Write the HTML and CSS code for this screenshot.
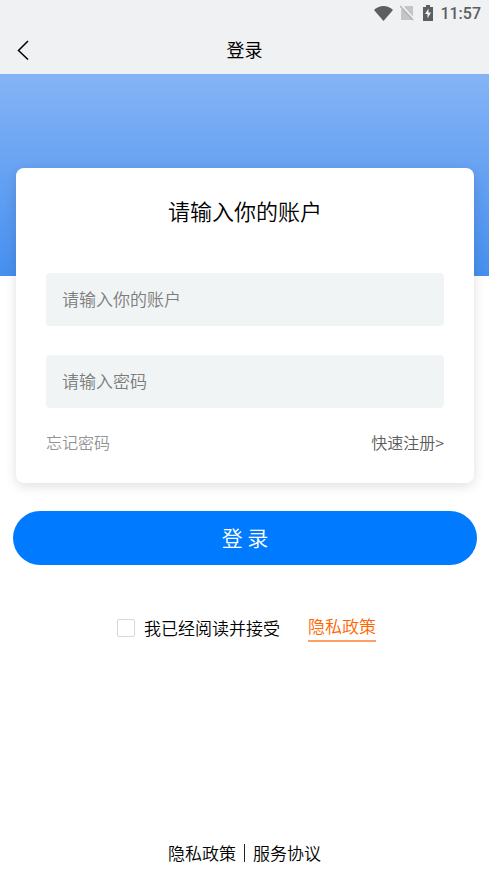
FILE: index.html
```html
<!DOCTYPE html>
<html lang="zh-CN">
<head>
<meta charset="utf-8">
<meta name="viewport" content="width=device-width, initial-scale=1">
<title>登录</title>
<link rel="stylesheet" href="styles.css">
</head>
<body>
<header class="top">
  <div class="status">
    <svg class="wifi" width="19" height="15" viewBox="0 0 19 15" aria-hidden="true"><path d="M0 4C3 1.300 6 0 9.500 0s6.500 1.300 9.500 4L9.500 15z"/></svg>
    <svg class="sim" width="14" height="16" viewBox="0 0 14 16" aria-hidden="true"><path class="sim-body" d="M5 1h8v14H1V5z"/><path class="sim-gap" d="M1 0l14 15"/><path class="sim-slash" d="M0 1l13 14"/></svg>
    <svg class="battery" width="10" height="16" viewBox="0 0 10 16" aria-hidden="true"><path d="M3 0h4v2h3v14H0V2h3z"/><path class="bolt" d="M5.500 3.500v4H8l-3.500 6v-4.500H2z"/></svg>
    <time class="clock">11:57</time>
  </div>
  <nav class="nav">
    <button class="back" type="button" aria-label="返回"><svg width="12" height="20" viewBox="0 0 12 20" aria-hidden="true"><path d="M11 1L1.500 10.500l9.500 9"/></svg></button>
    <h1 class="nav-title">登录</h1>
  </nav>
</header>
<main class="main">
  <form class="form">
    <section class="card">
      <h2 class="card-title">请输入你的账户</h2>
      <input class="field" type="text" placeholder="请输入你的账户" aria-label="账户">
      <input class="field" type="password" placeholder="请输入密码" aria-label="密码">
      <div class="links">
        <a class="forgot" href="#">忘记密码</a>
        <a class="register" href="#">快速注册&gt;</a>
      </div>
    </section>
    <button class="submit" type="submit">登 录</button>
    <div class="agree">
      <label class="agree-label"><input class="check" type="checkbox">我已经阅读并接受</label>
      <a class="policy" href="#">隐私政策</a>
    </div>
  </form>
</main>
<footer class="footer"><a href="#">隐私政策</a><span class="divider"></span><a href="#">服务协议</a></footer>
</body>
</html>
```
FILE: styles.css
```css
* {
  box-sizing: border-box;
}

body {
  margin: 0;
  min-height: 100vh;
  display: flex;
  flex-direction: column;
  background: #fff;
  color: #000;
  font-family: "Noto Sans CJK SC", sans-serif;
  font-size: 17px;
  font-weight: 350;
  line-height: 24px;
}

a {
  color: inherit;
  text-decoration: none;
}

button,
input {
  font-family: inherit;
  font-weight: inherit;
}

.top {
  background: #f0f1f3;
}

.status {
  display: flex;
  align-items: center;
  justify-content: flex-end;
  height: 26px;
  padding-right: 8px;
  fill: #5c5f60;
  color: #5c5f60;
}

.wifi {
  margin-right: 7px;
}

.sim {
  margin-right: 9px;
}

.sim-body {
  fill: #c3c5c6;
}

.sim-gap {
  stroke: #f0f1f3;
  stroke-width: 2;
}

.sim-slash {
  stroke: #b0b2b3;
  stroke-width: 1.5;
}

.battery {
  margin-right: 7px;
}

.bolt {
  fill: #f0f1f3;
}

.clock {
  font-family: Roboto, sans-serif;
  font-size: 16px;
  font-weight: 500;
  padding-top: 2px;
}

.nav {
  display: grid;
  grid-template-columns: 48px 1fr 48px;
  align-items: center;
  height: 48px;
}

.back {
  display: flex;
  align-items: center;
  height: 48px;
  padding: 0 17px;
  border: 0;
  background: none;
}

.back path {
  fill: none;
  stroke: #000;
  stroke-width: 1.5;
}

.nav-title {
  margin: 0;
  padding-bottom: 2px;
  text-align: center;
  font-size: 18px;
  font-weight: 400;
}

.main {
  flex: 1;
  padding-top: 94px;
  background: linear-gradient(#85b4f6, #468fef) top / 100% 202px no-repeat;
}

.card {
  margin: 0 15px 28px 16px;
  padding: 26px 30px 28px;
  border-radius: 8px;
  background: #fff;
  box-shadow: 0 3px 12px rgba(0, 0, 0, 0.13);
}

.card-title {
  margin: 0 0 47px;
  text-align: center;
  font-size: 22px;
  font-weight: inherit;
  line-height: 32px;
}

.field {
  display: block;
  width: 100%;
  height: 53px;
  margin-bottom: 29px;
  padding: 0 16px 2px;
  border: 0;
  border-radius: 4px;
  background: #f0f4f5;
  font-size: 17px;
}

.field::placeholder {
  color: #7c7c7c;
  opacity: 1;
}

.links {
  display: flex;
  justify-content: space-between;
  margin-top: -7px;
  padding-bottom: 1px;
  font-size: 16px;
}

.forgot {
  color: #949494;
}

.register {
  color: #5c5c5c;
}

.submit {
  display: block;
  width: calc(100% - 25px);
  height: 54px;
  margin: 0 12px 0 13px;
  padding: 0 0 2px;
  border: 0;
  border-radius: 27px;
  background: #007aff;
  color: #fff;
  font-size: 21px;
}

.agree {
  display: flex;
  justify-content: center;
  gap: 28px;
  margin-top: 49px;
  padding-left: 4px;
}

.agree-label {
  display: flex;
  align-items: center;
  gap: 9px;
}

.check {
  appearance: none;
  width: 18px;
  height: 18px;
  margin: 0;
  border: 1px solid #d8d8d8;
  border-radius: 2px;
  background: #fff;
}

.policy {
  padding-bottom: 2px;
  border-bottom: 2px solid #ff9f66;
  color: #ff6600;
}

.footer {
  display: flex;
  justify-content: center;
  align-items: center;
  gap: 8px;
  padding-bottom: 4px;
}

.divider {
  width: 1px;
  height: 18px;
  background: #222;
}
```
